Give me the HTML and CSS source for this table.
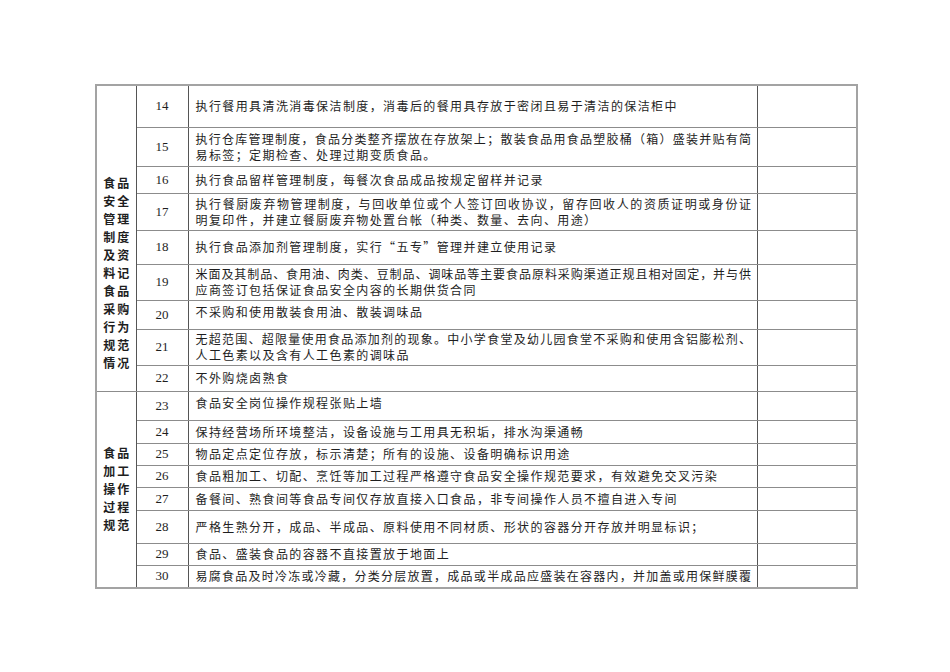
FILE: index.html
```html
<!DOCTYPE html>
<html lang="zh-CN">
<head>
<meta charset="utf-8">
<title>食品安全检查表</title>
<link rel="stylesheet" href="styles.css">
</head>
<body>
<div class="page">
<table class="sheet">
  <colgroup>
    <col class="c-cat"><col class="c-no"><col class="c-text"><col class="c-res">
  </colgroup>
  <tbody>
    <tr class="h42">
      <td class="cat cat-a" rowspan="9">食品<br>安全<br>管理<br>制度<br>及资<br>料记<br>食品<br>采购<br>行为<br>规范<br>情况</td>
      <td class="no">14</td>
      <td class="txt">执行餐用具清洗消毒保洁制度，消毒后的餐用具存放于密闭且易于清洁的保洁柜中</td>
      <td class="res"></td>
    </tr>
    <tr class="h39">
      <td class="no">15</td>
      <td class="txt"><span class="fill">执行仓库管理制度，食品分类整齐摆放在存放架上；散装食品用食品塑胶桶（箱）盛装并贴有简</span><span class="line">易标签；定期检查、处理过期变质食品。</span></td>
      <td class="res"></td>
    </tr>
    <tr class="h27">
      <td class="no">16</td>
      <td class="txt">执行食品留样管理制度，每餐次食品成品按规定留样并记录</td>
      <td class="res"></td>
    </tr>
    <tr class="h37">
      <td class="no">17</td>
      <td class="txt"><span class="fill">执行餐厨废弃物管理制度，与回收单位或个人签订回收协议，留存回收人的资质证明或身份证</span><span class="line">明复印件，并建立餐厨废弃物处置台帐（种类、数量、去向、用途）</span></td>
      <td class="res"></td>
    </tr>
    <tr class="h34">
      <td class="no">18</td>
      <td class="txt">执行食品添加剂管理制度，实行“五专”管理并建立使用记录</td>
      <td class="res"></td>
    </tr>
    <tr class="h36">
      <td class="no">19</td>
      <td class="txt"><span class="fill">米面及其制品、食用油、肉类、豆制品、调味品等主要食品原料采购渠道正规且相对固定，并与供</span><span class="line">应商签订包括保证食品安全内容的长期供货合同</span></td>
      <td class="res"></td>
    </tr>
    <tr class="h29">
      <td class="no">20</td>
      <td class="txt top">不采购和使用散装食用油、散装调味品</td>
      <td class="res"></td>
    </tr>
    <tr class="h36">
      <td class="no">21</td>
      <td class="txt"><span class="fill">无超范围、超限量使用食品添加剂的现象。中小学食堂及幼儿园食堂不采购和使用含铝膨松剂、</span><span class="line">人工色素以及含有人工色素的调味品</span></td>
      <td class="res"></td>
    </tr>
    <tr class="h26">
      <td class="no">22</td>
      <td class="txt">不外购烧卤熟食</td>
      <td class="res"></td>
    </tr>
    <tr class="h29">
      <td class="cat cat-b" rowspan="8">食品<br>加工<br>操作<br>过程<br>规范</td>
      <td class="no">23</td>
      <td class="txt top">食品安全岗位操作规程张贴上墙</td>
      <td class="res"></td>
    </tr>
    <tr class="h23">
      <td class="no">24</td>
      <td class="txt">保持经营场所环境整洁，设备设施与工用具无积垢，排水沟渠通畅</td>
      <td class="res"></td>
    </tr>
    <tr class="h22">
      <td class="no">25</td>
      <td class="txt">物品定点定位存放，标示清楚；所有的设施、设备明确标识用途</td>
      <td class="res"></td>
    </tr>
    <tr class="h22">
      <td class="no">26</td>
      <td class="txt">食品粗加工、切配、烹饪等加工过程严格遵守食品安全操作规范要求，有效避免交叉污染</td>
      <td class="res"></td>
    </tr>
    <tr class="h23">
      <td class="no">27</td>
      <td class="txt">备餐间、熟食间等食品专间仅存放直接入口食品，非专间操作人员不擅自进入专间</td>
      <td class="res"></td>
    </tr>
    <tr class="h33">
      <td class="no">28</td>
      <td class="txt">严格生熟分开，成品、半成品、原料使用不同材质、形状的容器分开存放并明显标识；</td>
      <td class="res"></td>
    </tr>
    <tr class="h22">
      <td class="no">29</td>
      <td class="txt">食品、盛装食品的容器不直接置放于地面上</td>
      <td class="res"></td>
    </tr>
    <tr class="h23">
      <td class="no">30</td>
      <td class="txt"><span class="fill">易腐食品及时冷冻或冷藏，分类分层放置，成品或半成品应盛装在容器内，并加盖或用保鲜膜覆</span></td>
      <td class="res"></td>
    </tr>
  </tbody>
</table>
</div>
</body>
</html>
```

FILE: styles.css
```css
html, body {
  margin: 0;
  padding: 0;
  background: #ffffff;
}

.page {
  padding: 84px 0 0 95px;
}

.sheet {
  border-collapse: collapse;
  table-layout: fixed;
  width: 761px;
  border: 2px solid #a3a3a3;
  font-family: "Noto Sans CJK SC", "Noto Sans CJK JP", sans-serif;
  color: #1e1e1e;
}

.c-cat { width: 40px; }
.c-no { width: 52px; }
.c-text { width: 569px; }
.c-res { width: 100px; }

.sheet td {
  padding: 0;
  border-top: 1px solid #8c8c8c;
  border-bottom: 1px solid #8c8c8c;
  border-left: 1px solid #555555;
  border-right: 1px solid #555555;
}

.h42 { height: 42px; }
.h39 { height: 39px; }
.h37 { height: 37px; }
.h36 { height: 36px; }
.h34 { height: 34px; }
.h33 { height: 33px; }
.h29 { height: 29px; }
.h27 { height: 27px; }
.h26 { height: 26px; }
.h23 { height: 23px; }
.h22 { height: 22px; }

.sheet .cat {
  font-weight: 700;
  font-size: 12px;
  line-height: 18px;
  letter-spacing: 2px;
  text-align: center;
  padding-left: 2px;
}

.sheet .cat-a {
  vertical-align: top;
  padding-top: 88px;
}

.sheet .cat-b {
  vertical-align: middle;
}

.sheet .no {
  font-family: "Liberation Serif", serif;
  font-size: 13px;
  text-align: center;
  vertical-align: middle;
}

.sheet .txt {
  font-size: 12px;
  line-height: 16px;
  letter-spacing: 1.4px;
  padding: 0 5px 0 7px;
  vertical-align: middle;
  white-space: nowrap;
  overflow: hidden;
}

.sheet .txt.top {
  vertical-align: top;
  padding-top: 3px;
}

.fill {
  display: block;
  letter-spacing: 0.5px;
  text-align: justify;
  text-align-last: justify;
  white-space: normal;
}

.line {
  display: block;
}

.sheet .res {
  vertical-align: middle;
}
```
